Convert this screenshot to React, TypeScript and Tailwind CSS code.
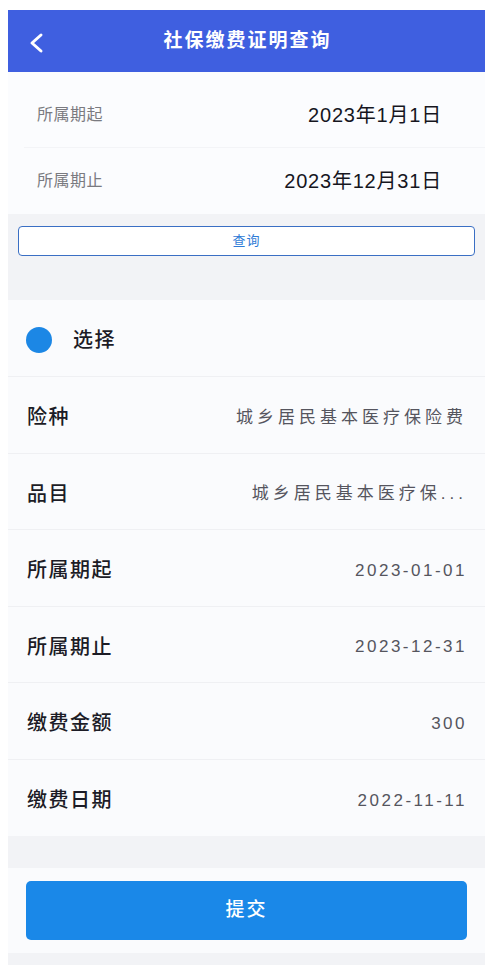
import React from "react";

const font = { fontFamily: '"Liberation Sans", "Noto Sans CJK SC", sans-serif' };

const rows: { label: string; value: string; cjk?: boolean }[] = [
  { label: "险种", value: "城乡居民基本医疗保险费", cjk: true },
  { label: "品目", value: "城乡居民基本医疗保...", cjk: true },
  { label: "所属期起", value: "2023-01-01" },
  { label: "所属期止", value: "2023-12-31" },
  { label: "缴费金额", value: "300" },
  { label: "缴费日期", value: "2022-11-11" },
];

export default function App() {
  return (
    <div className="w-[492px] h-[968px] bg-white pt-[10px] pl-[8px] overflow-hidden" style={font}>
      <div className="w-[477px] bg-[#fafbfd]">
        {/* header */}
        <div className="relative h-[62px] bg-[#3f5fe0] flex items-center justify-center">
          <svg className="absolute left-[19px] top-[22px]" width="20" height="22" viewBox="0 0 20 22" fill="none">
            <path d="M14 3 L5 11 L14 19" stroke="white" strokeWidth="3" strokeLinecap="round" strokeLinejoin="round" />
          </svg>
          <span className="text-white text-[19px] font-bold tracking-[2px] pl-[2px]">社保缴费证明查询</span>
        </div>

        {/* top date section */}
        <div className="pt-[10px] bg-[#fbfcfe]">
          <div className="h-[66px] flex items-center justify-between pl-[13px] pr-[43px] border-b border-[#f3f4f7] ml-[16px]">
            <span className="text-[16px] text-[#7a7a80] tracking-[0.5px]">所属期起</span>
            <span className="text-[20px] text-[#16161e] tracking-[0.8px]">2023年1月1日</span>
          </div>
          <div className="h-[66px] flex items-center justify-between pl-[29px] pr-[43px]">
            <span className="text-[16px] text-[#7a7a80] tracking-[0.5px]">所属期止</span>
            <span className="text-[20px] text-[#16161e] tracking-[0.8px]">2023年12月31日</span>
          </div>
        </div>

        {/* query area */}
        <div className="h-[86px] bg-[#f2f3f6] pt-[12px] px-[10px]">
          <div className="h-[30px] rounded-[4px] border-[1.5px] border-[#3a6fc4] bg-white flex items-center justify-center">
            <span className="text-[13px] text-[#2f7bd6] tracking-[1px]">查询</span>
          </div>
        </div>

        {/* detail list */}
        <div className="bg-[#fafbfd]">
          <div className="h-[77px] flex items-center pl-[18px] pt-[4px] border-b border-[#eff0f3]">
            <span className="w-[26px] h-[26px] rounded-full bg-[#1c87e5]" />
            <span className="ml-[21px] text-[20px] font-medium text-[#1c1c26] tracking-[1.5px]">选择</span>
          </div>
          {rows.map((r, i) => (
            <div
              key={r.label}
              className={`h-[76.5px] flex items-center justify-between pl-[19px] pr-[18px] pt-[5px] ${i < rows.length - 1 ? "border-b border-[#eff0f3]" : ""}`}
            >
              <span className="text-[20px] font-medium text-[#1c1c26] tracking-[1.5px]">{r.label}</span>
              <span className={`text-[17px] text-[#55555e] ${r.cjk ? "tracking-[4px]" : "tracking-[2.5px]"}`}>{r.value}</span>
            </div>
          ))}
        </div>

        <div className="h-[32px] bg-[#f2f3f6]" />

        <div className="pt-[13px] pb-[13px] px-[18px] bg-[#fafbfd]">
          <div className="h-[59px] rounded-[5px] bg-[#1a88e8] flex items-center justify-center">
            <span className="text-white text-[19px] font-medium tracking-[2px]">提交</span>
          </div>
        </div>
        <div className="h-[12px] bg-[#f2f3f6]" />
      </div>
    </div>
  );
}
